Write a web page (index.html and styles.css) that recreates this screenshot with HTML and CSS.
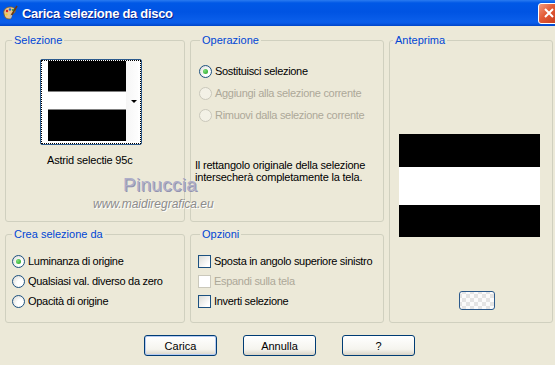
FILE: index.html
```html
<!DOCTYPE html>
<html lang="it">

<head>
  <title>Carica selezione da disco</title>
  <meta charset="utf-8">
  <link rel="stylesheet" href="styles.css">
</head>

<body>
  <div class="titlebar">
    <svg class="app-icon" viewBox="0 0 16 16" width="16" height="16">
      <path d="M2 9 C1 5 4 2 8 2 C12 2 14 4 13 7 C12.5 9 10 8 9.5 10 C9 12 10 14 7 14 C4 14 2.5 12 2 9 Z" fill="#E9C48A" stroke="#7A5A2A" stroke-width="0.8"/>
      <circle cx="5" cy="6" r="1.2" fill="#D92020"/>
      <circle cx="8" cy="4.5" r="1.2" fill="#2060E0"/>
      <circle cx="11" cy="5" r="1.1" fill="#20A030"/>
      <circle cx="4.5" cy="9.5" r="1.1" fill="#F0D020"/>
      <path d="M15 1 L9 11" stroke="#6B3A12" stroke-width="1.6"/>
      <path d="M9.5 10 L8 13" stroke="#C0C0C0" stroke-width="1.8"/>
    </svg>
    <span class="title">Carica selezione da disco</span>
    <span class="close">
      <svg viewBox="0 0 10 10" width="10" height="10">
        <path d="M1 1 L9 9 M9 1 L1 9" stroke="#fff" stroke-width="2"/>
      </svg>
    </span>
  </div>

  <div class="dialog">
    <div class="panels">
      <fieldset class="group group-sel">
        <legend>Selezione</legend>
        <div class="thumb">
          <div class="thumb-focus">
            <div class="bands thumb-bands">
              <div class="band-black b1"></div>
              <div class="band-white b2"></div>
              <div class="band-black b3"></div>
            </div>
            <div class="thumb-side"><span class="arrow"></span></div>
          </div>
        </div>
        <div class="caption">Astrid selectie 95c</div>
      </fieldset>

      <fieldset class="group group-mid">
        <legend>Operazione</legend>
        <div class="options op-list">
          <div class="row"><span class="radio checked"></span>Sostituisci selezione</div>
          <div class="row disabled"><span class="radio"></span>Aggiungi alla selezione corrente</div>
          <div class="row disabled"><span class="radio"></span>Rimuovi dalla selezione corrente</div>
        </div>
        <p class="note">Il rettangolo originale della selezione<br>intersecherà completamente la tela.</p>
      </fieldset>

      <fieldset class="group group-preview">
        <legend>Anteprima</legend>
        <div class="bands preview">
          <div class="band-black p1"></div>
          <div class="band-white p2"></div>
          <div class="band-black p3"></div>
        </div>
        <span class="bg-button"></span>
      </fieldset>

      <fieldset class="group group-sel">
        <legend>Crea selezione da</legend>
        <div class="options short-list left-list">
          <div class="row"><span class="radio checked"></span>Luminanza di origine</div>
          <div class="row"><span class="radio"></span>Qualsiasi val. diverso da zero</div>
          <div class="row"><span class="radio"></span>Opacità di origine</div>
        </div>
      </fieldset>

      <fieldset class="group group-mid">
        <legend>Opzioni</legend>
        <div class="options short-list mid-list">
          <div class="row"><span class="check"></span>Sposta in angolo superiore sinistro</div>
          <div class="row disabled"><span class="check"></span>Espandi sulla tela</div>
          <div class="row"><span class="check"></span>Inverti selezione</div>
        </div>
      </fieldset>
    </div>

    <div class="buttons">
      <button class="btn default">Carica</button>
      <button class="btn">Annulla</button>
      <button class="btn">?</button>
    </div>

    <div class="watermark">
      <span class="wm-name">Pinuccia</span>
      <span class="wm-site">www.maidiregrafica.eu</span>
    </div>
  </div>
</body>

</html>
```

FILE: styles.css
```css
* {
  box-sizing: border-box;
}

body {
  margin: 0;
  width: 555px;
  height: 365px;
  overflow: hidden;
  background-color: #ece9d8;
  font-family: "Liberation Sans", Arial, sans-serif;
  font-size: 11px;
  color: #000;
}

/* title bar */

.titlebar {
  display: flex;
  align-items: center;
  height: 26px;
  padding-left: 2px;
  overflow: hidden;
  background: linear-gradient(#2a7bf0 0, #0058e6 3px, #0054e3 12px, #0a5eea 21px, #0a5ce8 23px, #0045c8 26px);
}

.app-icon {
  margin-right: 4px;
}

.title {
  color: #fff;
  font-weight: bold;
  font-size: 13px;
  letter-spacing: -0.3px;
  text-shadow: 1px 1px 0 #0a1e8a;
}

.close {
  display: flex;
  align-items: center;
  justify-content: center;
  width: 21px;
  height: 21px;
  margin-left: auto;
  margin-right: -4px;
  border: 1px solid #fff;
  border-radius: 3px;
  background: linear-gradient(135deg, #f39a7e, #e25a35 45%, #c53b1c);
}

/* dialog body */

.dialog {
  position: relative;
  padding: 8px 2px 0 5px;
}

.panels {
  display: grid;
  grid-template-columns: 180px 194px 164px;
  grid-template-rows: 188px 95px;
  column-gap: 5px;
  row-gap: 6px;
}

.group {
  display: flex;
  flex-direction: column;
  margin: 0;
  padding: 0;
  min-width: 0;
  border: 1px solid #d0d0bf;
  border-radius: 3px;
}

.group legend {
  margin-left: 6px;
  padding: 0 2px;
  line-height: 13px;
  color: #0046d5;
}

.group-mid legend {
  margin-left: 9px;
}

.group-preview {
  grid-column: 3;
  grid-row: 1 / 3;
}

.group-preview legend {
  margin-left: 3px;
}

/* selection thumbnail */

.thumb {
  align-self: flex-start;
  width: 102px;
  height: 86px;
  margin: 12px 0 0 34px;
  border: 1px solid #2c5a8c;
  border-radius: 2px;
  background-color: #fff;
}

.thumb-focus {
  display: flex;
  height: 100%;
  padding: 0 2px 2px 6px;
  border: 1px dotted #000;
}

.thumb-bands {
  width: 78px;
  height: 80px;
}

.bands {
  display: flex;
  flex-direction: column;
}

.band-black {
  background-color: #000;
}

.band-white {
  background-color: #fff;
}

.b1 {
  height: 31px;
  border-bottom: 1px solid #808080;
}

.b2 {
  height: 18px;
  border-bottom: 1px solid #808080;
}

.b3 {
  flex: 1;
}

.thumb-side {
  display: flex;
  align-items: center;
  justify-content: flex-end;
  width: 12px;
  padding-right: 1px;
  background: linear-gradient(90deg, #f6f6f6, #fdfdfd);
}

.arrow {
  width: 0;
  height: 0;
  border-left: 3px solid transparent;
  border-right: 3px solid transparent;
  border-top: 3px solid #000;
}

.caption {
  margin: 9px 0 0 41px;
  line-height: 13px;
  letter-spacing: -0.2px;
}

/* radio buttons and checkboxes */

.options .row {
  display: flex;
  align-items: center;
  gap: 3px;
  letter-spacing: -0.3px;
}

.op-list {
  margin: 13px 0 0 8px;
}

.op-list .row {
  height: 22px;
}

.short-list {
  margin-top: 10px;
}

.short-list .row {
  height: 20px;
}

.left-list {
  margin-left: 6px;
}

.mid-list {
  margin-left: 7px;
}

.row.disabled {
  color: #aca899;
}

.radio {
  position: relative;
  flex: none;
  width: 13px;
  height: 13px;
  border: 1px solid #1c5180;
  border-radius: 50%;
  background: radial-gradient(circle at 65% 65%, #fff 30%, #dcdcd7 90%);
}

.radio.checked::after {
  content: "";
  position: absolute;
  left: 3px;
  top: 3px;
  width: 5px;
  height: 5px;
  border-radius: 50%;
  background: radial-gradient(circle at 35% 35%, #7ee07a, #21a121);
}

.row.disabled .radio {
  border-color: #cac8bb;
  background: #f3f1e6;
}

.check {
  flex: none;
  width: 13px;
  height: 13px;
  border: 1px solid #1c5180;
  background: linear-gradient(135deg, #dcdcd7, #fff 80%);
}

.row.disabled .check {
  border-color: #cac8bb;
  background: #fff;
}

.note {
  margin: 33px 0 0 4px;
  line-height: 12px;
  letter-spacing: -0.2px;
}

/* preview */

.preview {
  width: 141px;
  height: 103px;
  margin: 87px 0 0 9px;
}

.p1 {
  height: 33px;
}

.p2 {
  height: 38px;
}

.p3 {
  flex: 1;
}

.bg-button {
  width: 36px;
  height: 19px;
  margin: 54px 0 0 69px;
  border: 1px solid #2c5a8c;
  border-radius: 3px;
  background-color: #f4f4f0;
  background-image: conic-gradient(#e4e4e4 25%, #fbfbfb 0 50%, #e4e4e4 0 75%, #fbfbfb 0);
  background-size: 8px 8px;
  background-position: 10px 2px;
}

/* bottom buttons */

.buttons {
  display: flex;
  gap: 26px;
  margin-top: 12px;
  padding-left: 139px;
}

.btn {
  width: 73px;
  height: 21px;
  padding: 0;
  border: 1px solid #003c74;
  border-radius: 3px;
  background: linear-gradient(#fff, #f5f4ee 70%, #d8d3c6);
  font-family: "Liberation Sans", Arial, sans-serif;
  font-size: 11px;
  color: #000;
}

.btn.default {
  box-shadow: inset 0 0 0 1px #b6cbf2;
}

/* watermark */

.watermark {
  position: absolute;
  left: 93px;
  top: 148px;
  width: 124px;
}

.wm-name {
  display: block;
  margin-left: 30px;
  font-size: 19px;
  line-height: 22px;
  letter-spacing: 0.3px;
  white-space: nowrap;
  color: #aeaec8;
  text-shadow: 1px 1px 0 #9292ae;
}

.wm-site {
  display: block;
  margin-top: 2px;
  font-size: 12px;
  line-height: 12px;
  font-style: italic;
  color: #8c8c8c;
  text-shadow: 1px 1px 0 #fff;
}
```
